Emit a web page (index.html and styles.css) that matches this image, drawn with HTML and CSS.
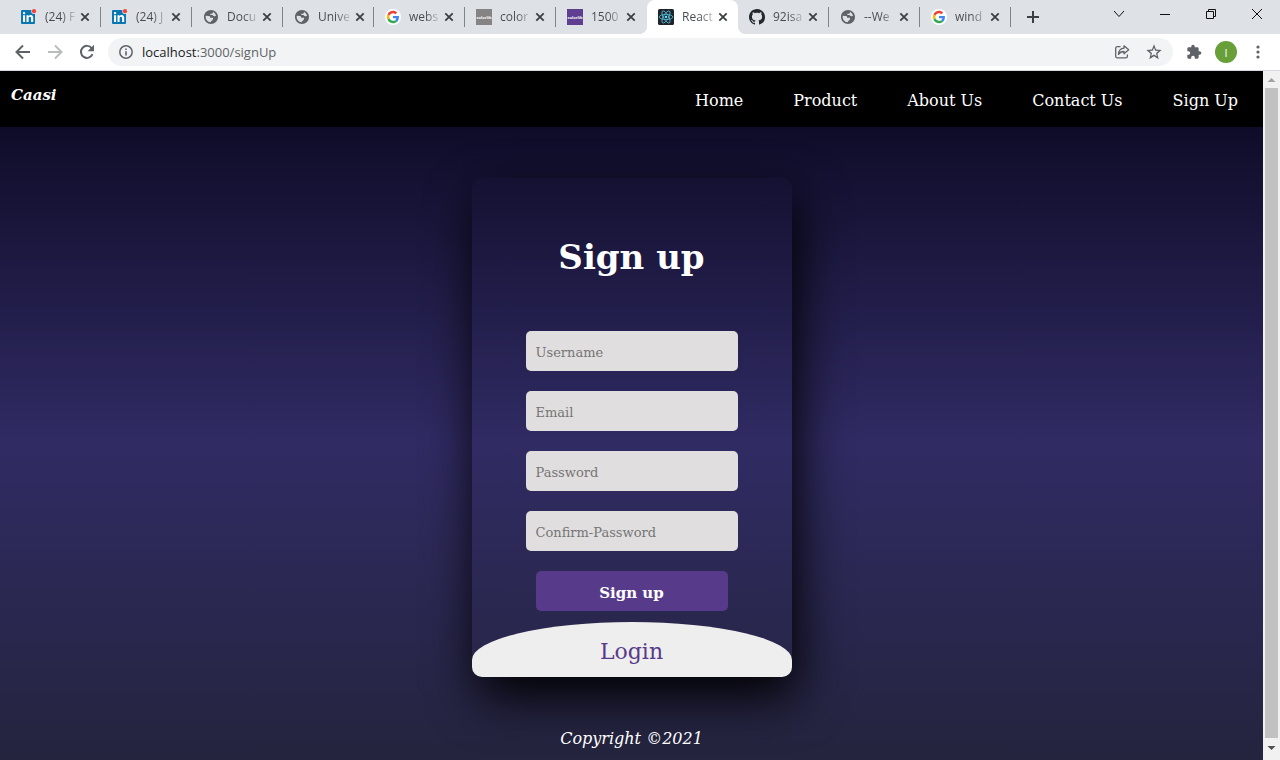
FILE: index.html
```html
<!DOCTYPE html>
<html lang="en">
<head>
<meta charset="utf-8">
<title>React App</title>
<link rel="stylesheet" href="styles.css">
</head>
<body>
<svg class="sprite" aria-hidden="true">
  <symbol id="close" viewBox="0 0 10 10"><path d="M1.3 1.3l7.4 7.4M8.7 1.3L1.3 8.7" stroke="#3c4043" stroke-width="1.8" fill="none"/></symbol>
  <symbol id="linkedin" viewBox="0 0 16 16"><rect x="0" y="1" width="14" height="14" rx="1" fill="#0a77b5"/><path d="M2 6.2h2.1V13H2zM5.5 6.2h2v1c.5-.8 1.200-1.200 2.200-1.200 2 0 2.500 1.300 2.500 3.200V13h-2.100V9.600c0-1-.1-1.800-1.200-1.800s-1.300.8-1.300 1.700V13H5.500z" fill="#fff"/><circle cx="3.050" cy="4.100" r="1.200" fill="#fff"/><circle cx="13" cy="2.200" r="2.800" fill="#dee1e6"/><circle cx="13" cy="2.200" r="2.100" fill="#f44336"/></symbol>
  <symbol id="globe" viewBox="0 0 24 24"><path fill="#5f6368" d="M12 1.500C6.200 1.500 1.500 6.200 1.500 12S6.200 22.500 12 22.500 22.500 17.800 22.500 12 17.800 1.500 12 1.500zM11 19.930c-3.950-.49-7-3.850-7-7.930 0-.62.080-1.210.210-1.790l4.300.3c1.500 0 2 .8 2 1.800 0 .7.6 1 1.500 1h2c1 0 1.500 1 1 2l-1.500 2c-.6.8-1.500.8-1.500 2zM19.500 10.200c-1 1-2.500.8-3.500.3-1-.6-1.500-1.500-3-1.500h-1c-1.200 0-1.500-1.500-.5-2h1.800c1 0 1-1 1.700-1.900L15 4.590c2.200.9 3.900 3 4.500 5.610z"/></symbol>
  <symbol id="google" viewBox="0 0 24 24"><circle cx="12" cy="12" r="12" fill="#fff"/><g transform="translate(2.700 2.700) scale(.3875)"><path fill="#EA4335" d="M24 9.500c3.540 0 6.710 1.220 9.210 3.600l6.850-6.850C35.900 2.380 30.470 0 24 0 14.620 0 6.510 5.380 2.560 13.220l7.980 6.190C12.430 13.720 17.740 9.500 24 9.500z"/><path fill="#4285F4" d="M46.980 24.550c0-1.570-.15-3.090-.38-4.550H24v9.020h12.940c-.58 2.960-2.260 5.480-4.780 7.180l7.730 6c4.510-4.180 7.090-10.360 7.090-17.650z"/><path fill="#FBBC05" d="M10.530 28.590c-.48-1.450-.76-2.990-.76-4.590s.27-3.140.76-4.590l-7.980-6.190C.92 16.460 0 20.120 0 24c0 3.880.92 7.540 2.560 10.780l7.970-6.190z"/><path fill="#34A853" d="M24 48c6.480 0 11.930-2.130 15.890-5.810l-7.730-6c-2.150 1.450-4.920 2.300-8.160 2.300-6.260 0-11.570-4.220-13.470-9.910l-7.980 6.190C6.510 42.620 14.620 48 24 48z"/></g></symbol>
  <symbol id="github" viewBox="0 0 16 16"><path fill="#24292f" fill-rule="evenodd" d="M8 0C3.580 0 0 3.580 0 8c0 3.540 2.290 6.530 5.470 7.590.4.070.55-.17.55-.38 0-.19-.01-.82-.01-1.490-2.010.37-2.530-.49-2.690-.94-.09-.23-.48-.94-.82-1.130-.28-.15-.68-.52-.01-.53.63-.01 1.080.58 1.230.82.72 1.210 1.870.87 2.330.66.070-.52.280-.87.510-1.070-1.780-.2-3.640-.89-3.640-3.950 0-.87.310-1.590.82-2.150-.08-.2-.36-1.020.080-2.120 0 0 .67-.21 2.200.82.64-.18 1.320-.27 2-.27s1.360.09 2 .27c1.530-1.040 2.200-.82 2.200-.82.440 1.100.160 1.920.080 2.120.51.560.82 1.270.82 2.150 0 3.070-1.870 3.750-3.650 3.950.290.250.540.730.540 1.480 0 1.070-.01 1.930-.01 2.200 0 .21.150.46.550.38A8.010 8.010 0 0 0 16 8c0-4.420-3.580-8-8-8z"/></symbol>
  <symbol id="react" viewBox="0 0 16 16"><rect width="16" height="16" rx="1.500" fill="#20232a"/><g fill="none" stroke="#53c1de" stroke-width=".8"><ellipse cx="8" cy="8" rx="6.800" ry="2.600"/><ellipse cx="8" cy="8" rx="6.800" ry="2.600" transform="rotate(60 8 8)"/><ellipse cx="8" cy="8" rx="6.800" ry="2.600" transform="rotate(120 8 8)"/></g><circle cx="8" cy="8" r="1.300" fill="#61dafb"/></symbol>
</svg>

<div class="tabs">
  <div class="tab"><svg class="fav"><use href="#linkedin"/></svg><span class="name">(24) F</span><button class="x" aria-label="Close tab"><svg><use href="#close"/></svg></button></div>
  <div class="tab"><svg class="fav"><use href="#linkedin"/></svg><span class="name">(24) J</span><button class="x" aria-label="Close tab"><svg><use href="#close"/></svg></button></div>
  <div class="tab"><svg class="fav"><use href="#globe"/></svg><span class="name">Docu</span><button class="x" aria-label="Close tab"><svg><use href="#close"/></svg></button></div>
  <div class="tab"><svg class="fav"><use href="#globe"/></svg><span class="name">Unive</span><button class="x" aria-label="Close tab"><svg><use href="#close"/></svg></button></div>
  <div class="tab"><svg class="fav"><use href="#google"/></svg><span class="name">webs</span><button class="x" aria-label="Close tab"><svg><use href="#close"/></svg></button></div>
  <div class="tab"><svg class="fav colorlib gray" viewBox="0 0 16 16"><text x="8" y="10">colorlib</text></svg><span class="name">color</span><button class="x" aria-label="Close tab"><svg><use href="#close"/></svg></button></div>
  <div class="tab before-active"><svg class="fav colorlib violet" viewBox="0 0 16 16"><text x="8" y="10">colorlib</text></svg><span class="name">1500</span><button class="x" aria-label="Close tab"><svg><use href="#close"/></svg></button></div>
  <div class="tab active"><svg class="fav"><use href="#react"/></svg><span class="name">React</span><button class="x" aria-label="Close tab"><svg><use href="#close"/></svg></button></div>
  <div class="tab"><svg class="fav"><use href="#github"/></svg><span class="name">92isa</span><button class="x" aria-label="Close tab"><svg><use href="#close"/></svg></button></div>
  <div class="tab"><svg class="fav"><use href="#globe"/></svg><span class="name">--We</span><button class="x" aria-label="Close tab"><svg><use href="#close"/></svg></button></div>
  <div class="tab"><svg class="fav"><use href="#google"/></svg><span class="name">wind</span><button class="x" aria-label="Close tab"><svg><use href="#close"/></svg></button></div>
  <button class="new-tab" aria-label="New tab"><svg viewBox="0 0 12 12"><path d="M6 0v12M0 6h12" stroke="#3c4043" stroke-width="2"/></svg></button>
  <div class="window">
    <button aria-label="Search tabs"><svg viewBox="0 0 12 12"><path d="M1 3l5 5.500L11 3"/></svg></button>
    <button aria-label="Minimize"><svg viewBox="0 0 12 12"><path d="M1 6.500h10"/></svg></button>
    <button aria-label="Restore"><svg viewBox="0 0 12 12"><path d="M1.500 3.500h7v7h-7zM3.500 3.500v-2h7v7h-2"/></svg></button>
    <button aria-label="Close window"><svg viewBox="0 0 12 12"><path d="M1 1l10 10M11 1L1 11"/></svg></button>
  </div>
</div>

<div class="toolbar">
  <div class="history">
    <button aria-label="Back"><svg viewBox="0 0 16 16"><path d="M15 8H2M8 1.500L1.500 8 8 14.500" fill="none" stroke="#5f6368" stroke-width="2"/></svg></button>
    <button aria-label="Forward"><svg viewBox="0 0 16 16"><path d="M1 8h13M8 1.500L14.500 8 8 14.500" fill="none" stroke="#babcbe" stroke-width="2"/></svg></button>
    <button aria-label="Reload"><svg viewBox="0 0 16 16"><path d="M13.500 10.200A6 6 0 1 1 12.800 4.300" fill="none" stroke="#5f6368" stroke-width="2"/><path d="M15 .8v6.400H8.600z" fill="#5f6368"/></svg></button>
  </div>
  <div class="address">
    <svg class="info" viewBox="0 0 14 14"><circle cx="7" cy="7" r="6.200" fill="none" stroke="#5f6368" stroke-width="1.500"/><path d="M7 6.200v4.300M7 3.400V5" stroke="#5f6368" stroke-width="1.600"/></svg>
    <span class="url"><b>localhost</b>:3000/signUp</span>
    <button aria-label="Share"><svg viewBox="0 0 16 16" fill="none" stroke="#5f6368" stroke-width="1.300"><path d="M6.500 2.700H3.300C2.300 2.700 1.700 3.300 1.700 4.300v8c0 1 .6 1.600 1.600 1.600h8.500c1 0 1.600-.6 1.600-1.600v-1.800"/><path d="M10 1.800l4.700 4-4.700 4V7.500C7.200 7.500 5.700 8.300 4.500 10.500c.2-3.500 2-6 5.500-6.300z" stroke-linejoin="round"/></svg></button>
    <button aria-label="Bookmark"><svg viewBox="1 1 22 22"><path fill="#5f6368" d="M22.500 9.240l-7.690-.66L12 1.500 9.190 8.590 1.500 9.240l5.820 5.030L5.570 21.800 12 17.770l6.430 4.030-1.740-7.530 5.810-5.030zM12 15.400l-3.760 2.270 1-4.280-3.320-2.880 4.380-.38L12 6.100l1.710 4.040 4.380.38-3.320 2.880 1 4.280L12 15.400z"/></svg></button>
  </div>
  <button aria-label="Extensions"><svg viewBox="0 0 24 24"><path fill="#5f6368" d="M20.500 11H19V7c0-1.100-.9-2-2-2h-4V3.500C13 2.120 11.880 1 10.500 1S8 2.120 8 3.500V5H4c-1.100 0-1.990.9-1.990 2v3.800H3.500c1.490 0 2.700 1.210 2.700 2.700s-1.210 2.700-2.700 2.700H2V20c0 1.100.9 2 2 2h3.800v-1.500c0-1.490 1.210-2.700 2.700-2.700s2.700 1.210 2.700 2.700V22H17c1.100 0 2-.9 2-2v-4h1.500c1.380 0 2.500-1.120 2.500-2.500S21.880 11 20.500 11z"/></svg></button>
  <button class="avatar">I</button>
  <button aria-label="Menu"><svg viewBox="0 0 16 16" fill="#5f6368"><circle cx="8" cy="3" r="1.600"/><circle cx="8" cy="8" r="1.600"/><circle cx="8" cy="13" r="1.600"/></svg></button>
</div>

<div class="viewport">
  <div class="page">
    <header class="navbar">
      <a class="logo" href="#">Caasi</a>
      <nav class="links"><a href="#">Home</a><a href="#">Product</a><a href="#">About Us</a><a href="#">Contact Us</a><a href="#">Sign Up</a></nav>
    </header>
    <div class="backdrop">
      <main class="content">
        <div class="card">
          <form class="form">
            <h1>Sign up</h1>
            <input type="text" placeholder="Username" aria-label="Username">
            <input type="email" placeholder="Email" aria-label="Email">
            <input type="password" placeholder="Password" aria-label="Password">
            <input type="password" placeholder="Confirm-Password" aria-label="Confirm-Password">
            <button type="submit">Sign up</button>
          </form>
          <a class="login" href="#">Login</a>
        </div>
      </main>
      <footer class="footer">Copyright ©2021</footer>
    </div>
  </div>
  <div class="scrollbar" aria-hidden="true">
    <svg viewBox="0 0 17 17"><path d="M8.500 7l4 4h-8z" fill="#a3a3a3"/></svg>
    <div class="thumb"></div>
    <svg class="down" viewBox="0 0 17 17"><path d="M4.500 3h8l-4 4z" fill="#505050"/></svg>
  </div>
</div>
</body>
</html>
```
FILE: styles.css
```css
* { box-sizing: border-box; }

body {
  margin: 0;
  min-height: 100vh;
  display: flex;
  flex-direction: column;
  font-family: "DejaVu Serif", serif;
}

button {
  border: 0;
  padding: 0;
  background: none;
  font: inherit;
  display: flex;
  align-items: center;
  justify-content: center;
}

a { text-decoration: none; }

.sprite { position: absolute; width: 0; height: 0; }

/* Tab strip */
.tabs {
  display: flex;
  height: 34px;
  padding-left: 10px;
  background: #dee1e6;
  font-family: "Open Sans", "Noto Sans", sans-serif;
}

.tab {
  position: relative;
  display: flex;
  align-items: center;
  flex: 0 1 91px;
  min-width: 0;
  padding: 0 11px;
}

.tab::after {
  content: "";
  position: absolute;
  right: 0;
  top: 7px;
  width: 1px;
  height: 20px;
  background: #808387;
}

.tab.active {
  background: #fff;
  border-radius: 8px 8px 0 0;
}

.tab.before-active::after { display: none; }

/* Flared feet of the active tab */
.tab.active::before,
.tab.active::after {
  content: "";
  position: absolute;
  top: auto;
  bottom: 0;
  width: 8px;
  height: 8px;
}

.tab.active::before {
  left: -8px;
  background: radial-gradient(circle at 0 0, transparent 8px, #fff 8px);
}

.tab.active::after {
  right: -8px;
  background: radial-gradient(circle at 100% 0, transparent 8px, #fff 8px);
}

.fav { width: 16px; height: 16px; flex: none; }

.name {
  flex: 1;
  margin: 0 5px 0 8px;
  white-space: nowrap;
  font-size: 12px;
  line-height: 18px;
  color: transparent;
  background: linear-gradient(to right, #45494d 55%, #c4c7cc);
  -webkit-background-clip: text;
  background-clip: text;
}

.x svg { width: 10px; height: 10px; }

.colorlib text {
  font: bold 4px "Open Sans", sans-serif;
  fill: #fff;
  text-anchor: middle;
}

.gray { background: #858383; }
.violet { background: #5f4090; }

.new-tab { width: 44px; }
.new-tab svg { width: 12px; height: 12px; }

.window { display: flex; margin-left: auto; height: 28px; }
.window button { width: 46px; }

.window svg {
  width: 12px;
  height: 12px;
  fill: none;
  stroke: #111;
}

/* Toolbar */
.toolbar {
  display: flex;
  align-items: center;
  gap: 10px;
  height: 37px;
  padding: 0 11px 0 12px;
  background: #fff;
  border-bottom: 1px solid #d5d8dc;
  font-family: "Open Sans", "Noto Sans", sans-serif;
}

.toolbar button { width: 22px; height: 22px; }
.toolbar svg { width: 16px; height: 16px; }
.history { display: flex; gap: 10px; width: 86px; }

.address {
  display: flex;
  align-items: center;
  flex: 1;
  gap: 10px;
  height: 28px;
  padding: 0 8px 0 11px;
  border-radius: 14px;
  background: #f1f3f4;
}

.toolbar .info { width: 14px; height: 14px; }

.url {
  flex: 1;
  margin-left: -1px;
  font-size: 13px;
  color: #5f6368;
}

.url b { font-weight: 400; color: #202124; }

.toolbar .avatar {
  border-radius: 50%;
  background: #689f38;
  color: #fff;
  font-size: 11px;
}

/* Web page */
.viewport { display: flex; flex: 1; }

.page {
  display: flex;
  flex-direction: column;
  flex: 1;
}

.backdrop {
  display: flex;
  flex-direction: column;
  flex: 1;
  background: linear-gradient(to bottom, #0f0c29, #302b63, #24243e);
}

.navbar {
  display: flex;
  justify-content: space-between;
  height: 56px;
  padding: 0 25px 0 11px;
  background: #000;
}

.navbar a { color: #fff; }

.logo {
  padding-top: 14px;
  font-size: 15px;
  line-height: 20px;
  font-weight: 700;
  font-style: italic;
}

.links {
  display: flex;
  gap: 50px;
  padding-top: 20px;
  font-size: 16px;
  line-height: 20px;
}

.content {
  display: flex;
  justify-content: center;
  padding-top: 51px;
}

.card {
  display: flex;
  flex-direction: column;
  width: 320px;
  border-radius: 10px;
  overflow: hidden;
  box-shadow: 5px 20px 50px #000;
}

.form {
  display: flex;
  flex-direction: column;
  align-items: center;
  gap: 20px;
  padding: 54px 54px 11px;
}

.form h1 {
  margin: 0 0 29px;
  font-size: 34px;
  line-height: 50px;
  color: #fff;
}

.form input {
  width: 100%;
  height: 40px;
  padding: 2px 10px 0;
  border: 0;
  border-radius: 5px;
  background: #e0dede;
  font: 13px "DejaVu Serif", serif;
}

.form input::placeholder { color: #757575; }

.form button {
  width: 192px;
  height: 40px;
  padding-top: 4px;
  border-radius: 5px;
  background: #573b8a;
  color: #fff;
  font-size: 15px;
  font-weight: 700;
}

.login {
  display: block;
  padding: 15px 0 10px;
  border-radius: 50% 50% 0 0 / 38px 38px 0 0;
  background: #eee;
  color: #573b8a;
  font-size: 22px;
  line-height: 30px;
  text-align: center;
}

.footer {
  margin-top: auto;
  padding: 10px 0 9px;
  color: #fff;
  font-size: 16px;
  line-height: 24px;
  font-style: italic;
  text-align: center;
}

.scrollbar {
  display: flex;
  flex-direction: column;
  width: 17px;
  background: #f1f1f1;
}

.scrollbar svg { width: 17px; height: 17px; }
.scrollbar .down { height: 22px; padding-top: 5px; }
.thumb { flex: 1; margin: 0 2px; background: #c1c1c1; }
```
